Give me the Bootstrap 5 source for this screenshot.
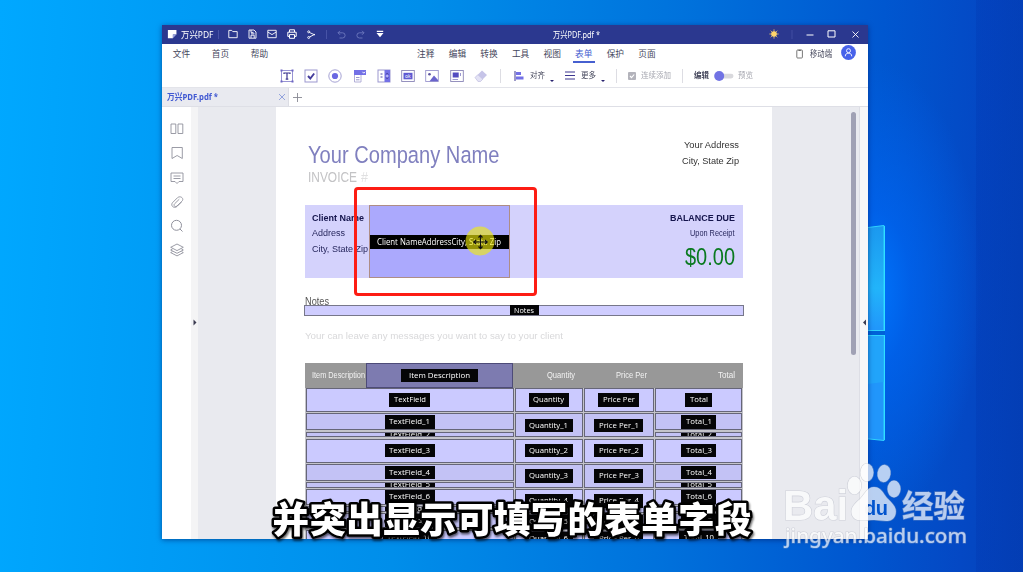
<!DOCTYPE html>
<html lang="zh-CN">
<head>
<meta charset="utf-8">
<title>万兴PDF</title>
<link href="https://cdn.jsdelivr.net/npm/bootstrap@5.3.0/dist/css/bootstrap.min.css" rel="stylesheet">
<style>
body{width:1023px;height:572px;overflow:hidden;position:relative;font-family:"Noto Sans","Noto Sans CJK SC",sans-serif;font-size:9px;line-height:1;color:#45475c;
 background:radial-gradient(ellipse 110px 230px at 872px 290px,#0074fc 0,rgba(0,100,240,.75) 35%,rgba(0,90,220,0) 100%),
 linear-gradient(90deg,transparent 0 976px,rgba(0,40,160,.18) 976px),
 linear-gradient(93deg,#00a8ff 0,#009cf6 17%,#008eea 40%,#0072dc 65%,#0057d0 84%,#0448c4 94%,#0442b8 100%)}
svg{display:block;overflow:visible}
.lit{position:absolute;left:0;top:0}
.app-window{position:absolute;left:162px;top:25px;width:706px;height:514px;background:#fff;box-shadow:0 1px 5px rgba(0,20,90,.55);overflow:hidden}
.fit{white-space:nowrap;flex:none;display:block}
.fit>span{display:inline-block;transform-origin:0 50%}
.titlebar{height:19px;background:#2b388f;color:#fff;display:grid;grid-template-columns:19px 32px 10.5px repeat(5,19.5px) 10.3px repeat(3,19.5px) 163.4px 48px 1fr 24px 34px 24px 24.5px;align-items:center;padding-bottom:1px}
.titlebar svg,.tools svg{margin:auto}
.titlebar .rule{width:1px;height:9px;background:#4753a6;margin:auto}
.menus{height:20px;display:grid;grid-template-columns:repeat(3,39px) 131px repeat(8,31.6px) 1fr 20px 22px 34px;align-items:center;text-align:center;font-size:8.7px;padding-right:2.500px}
.menus .on{color:#4660d0;position:relative;align-self:stretch;line-height:20px}
.menus .on::after{content:"";position:absolute;left:5px;right:5px;bottom:1.500px;height:1.5px;background:#4660d0}
.tools{height:24px;padding-left:112.500px;display:grid;grid-template-columns:repeat(9,24.3px) 13.8px 23.5px 15px 13px 23px 15px 14px 12px 19px 30px 23px 15px 29px 15px;align-items:center;font-size:7.6px;border-bottom:1px solid #e3e4ea}
.tools .rule{width:1px;height:14px;background:#dddde3;margin:auto}
.pale{color:#a6a7b0}
.tabs{height:19px;border-bottom:1px solid #dedfe6}
.tab-one{width:127px;background:#e9eaf0;color:#4159d2;border-right:1px solid #dcdde4;padding:0 3px 1px 5px}
.work{height:432px}
.rail{width:29px;padding-top:15px;flex:none}
.rail svg{height:14px;margin:0 auto 10.3px}
.grip{width:7px;background:#f4f4f5;flex:none;padding-top:212px}
.canvas-area{width:661px;background:#e9eaef;padding-left:78px;flex:none;display:flex}
.sheet{width:496px;height:432px;background:#fff;overflow:hidden;padding:34px 28px 0;font-family:"Liberation Sans",sans-serif;flex:none}
.scroll{width:5px;height:243px;background:#a0a1b4;border-radius:3px;margin:5px 0 0 79px}
.grip-r{width:9px;background:#f7f7f8;border-left:1px solid #dddee5;padding-top:212px;flex:none}
.head-row{height:64px;padding:0 5px 0 4px}
.company{font-size:24.5px;line-height:27px;color:#8080bf}
.inv{font-size:14.5px;line-height:18px;color:#c3c3c5}
.addr{font-size:9.6px;line-height:15.8px;color:#333;margin-top:-4px}
.client{height:73px;width:438px;background:#d4d2fc;color:#28285e;font-size:9.6px;line-height:15.7px;margin-left:.5px}
.client .who{width:64.5px;padding:4.500px 0 0 7px}
.client b{color:#14144c}
.picked{width:141px;height:73px;border:1px solid #ae8d86;background:#aba9fd;padding-top:29px}
.tagline{height:14px;background:#000;color:#fff;font:8.3px/13px "Open Sans",sans-serif;padding-left:7px}
.due{padding:4.500px 7.5px 0 0;width:232px}
.money{font-size:24.5px;line-height:32px;color:#0a7a20}
.notes-label{font-size:10.5px;line-height:12px;color:#555;margin:17px 0 0 1px;height:9.5px}
.notes-field{width:440px;height:11px;background:#cfcdff;border:1px solid #77778a}
.chip{background:#050507;color:#fff;font:8px/12.5px "Open Sans",sans-serif;height:13.5px;padding:0 4.500px;flex:none}
.notes-field .chip{height:10px;line-height:9px}
.hint{font-size:9.5px;line-height:12px;color:#d8d8da;margin:14.500px 0 0 1px;height:33px}
.thead-row{height:25px;width:438px;background:#989898;color:#f2f2f2;font-size:9.3px;line-height:25px;display:grid;grid-template-columns:7px 53px 1.500px 147px 34px 28px 41px 31px 71px 17px;margin-left:.5px}
.described{background:#7d7bb0;border:1px solid #4d4b78}
.grid-body{display:grid;grid-template-columns:208px 68px 70.500px 87px;gap:1px;width:438px;margin-left:.5px;padding-left:1px;background:#c4c4ca}
.stack{display:flex;flex-direction:column;gap:1.3px}
.fld{border:1px solid #666678;background:#cbcaff;display:flex;align-items:center;justify-content:center;overflow:hidden;flex:none}
.row-full{height:24px}
.row-mid{height:17px;background:#c3c2f5}
.row-thin{height:5.7px;background:#c3c2f5}
.row-low{height:15.5px}
.tinted{background:#c3c2f5}
.over{position:absolute}
.redbox{left:354px;top:187px;width:183px;height:109px;border:3px solid #fd1d14;border-radius:4px}
</style>
</head>
<body>
<svg class="lit" width="1023" height="572">
 <defs><linearGradient id="pane" x1="0" y1="0" x2="0" y2="1"><stop offset="0" stop-color="#1b98ef"/><stop offset=".6" stop-color="#22b4fa"/><stop offset="1" stop-color="#2196fb"/></linearGradient></defs>
 <path d="M860 228.500L884 225.500V330.500H860Z" fill="url(#pane)" stroke="#2fd3ff"/>
 <path d="M860 335.500H884V440.500L860 438Z" fill="#2196fb" stroke="#2fd3ff"/>
 <path d="M868 336H884V382L868 384Z" fill="#22a9fa" opacity=".7"/>
 <path d="M884.500 226V440" stroke="#2fe0ff" stroke-width="1"/><path d="M868 333H885" stroke="#0062d8" stroke-width="4"/>
</svg>

<main class="app-window">
 <header class="titlebar">
  <svg width="10" height="10" viewBox="0 0 9 9"><path d="M.8.800H8.500V5H5.300V8.300H.8Z" fill="#fff"/><path d="M5.300 8.300V5H8.500" fill="#98a1dc"/></svg>
  <div class="fit" data-w="32.500"><span>万兴PDF</span></div>
  <i class="rule"></i>
  <svg width="10" height="10" viewBox="0 0 10 10" fill="none" stroke="#fff" stroke-width=".9"><path d="M.8 8.700V1.400H3.700L4.800 2.600H9.200V8.700Z"/></svg>
  <svg width="9" height="10" viewBox="0 0 9 10" fill="none" stroke="#fff" stroke-width=".9"><path d="M1 1H6L8 3V9.200H1ZM3 9V6.200H6.200V9M3 1V3.400H5.500M3 4.800H6.500"/></svg>
  <svg width="10" height="10" viewBox="0 0 10 10" fill="none" stroke="#fff" stroke-width=".9"><path d="M.8 1.300H9.200V8.700H.8ZM.8 3L5 5.600L9.200 3"/></svg>
  <svg width="10" height="10" viewBox="0 0 10 10" fill="none" stroke="#fff" stroke-width="1"><path d="M2.500 3V.8H7.500V3M2.300 7.400H.8V3.200H9.200V7.400H7.700M2.500 5.600H7.500V9.300H2.500Z"/></svg>
  <svg width="9" height="9" viewBox="0 0 9 9" fill="none" stroke="#fff" stroke-width=".9"><path d="M2.500 2.500L8 5M2.500 7L8 4.200"/><circle cx="1.700" cy="1.800" r="1"/><circle cx="1.700" cy="7.500" r="1"/></svg>
  <i class="rule"></i>
  <svg width="9" height="9" viewBox="0 0 9 9" fill="none" stroke="#6d78bd" stroke-width=".9"><path d="M3 .8L1 2.800L3 4.800M1 2.800H5.500A2.600 2.600 0 0 1 5.500 8H2.500"/></svg>
  <svg width="9" height="9" viewBox="0 0 9 9" fill="none" stroke="#6d78bd" stroke-width=".9"><path d="M6 .8L8 2.800L6 4.800M8 2.800H3.500A2.600 2.600 0 0 0 3.500 8H6.500"/></svg>
  <svg width="8" height="8" viewBox="0 0 8 8" fill="#fff"><path d="M.8.800H7.200V2H.8ZM.5 3H7.500L4 7.300Z"/></svg>
  <span></span>
  <div class="fit" data-w="47"><span>万兴PDF.pdf *</span></div>
  <span></span>
  <svg width="10" height="10" viewBox="0 0 10 10"><circle cx="5" cy="5" r="2.800" fill="#ffd66b"/><path d="M5 .3V9.700M.3 5H9.700M1.700 1.700L8.300 8.300M8.300 1.700L1.700 8.300" stroke="#ffd66b" stroke-width=".7"/></svg>
  <svg width="28" height="9" viewBox="0 0 28 9"><path d="M3 0V9" stroke="#4753a6" stroke-width=".8"/><path d="M17.500 5H24.500" stroke="#fff" stroke-width="1"/></svg>
  <svg width="9" height="8" viewBox="0 0 9 8"><path d="M1 .8H8V7H1Z" fill="none" stroke="#fff" stroke-width="1"/></svg>
  <svg width="7" height="7" viewBox="0 0 7 7"><path d="M.5.500L6.500 6.500M6.500.500L.5 6.500" stroke="#fff" stroke-width=".9"/></svg>
 </header>
 <nav class="menus">
  <span>文件</span><span>首页</span><span>帮助</span><span></span>
  <span>注释</span><span>编辑</span><span>转换</span><span>工具</span><span>视图</span><span class="on">表单</span><span>保护</span><span>页面</span>
  <span></span>
  <svg class="ms-1" width="12" height="9" viewBox="0 0 12 9"><rect x="2.800" y="0" width="5.600" height="8" rx=".8" fill="none" stroke="#555" stroke-width=".8"/><path d="M4.500 .3H6.800" stroke="#555"/></svg>
  <div class="fit" data-w="22"><span>移动端</span></div>
  <svg width="15" height="15" viewBox="0 0 15 15" class="mx-auto mb-1"><circle cx="7.500" cy="7.500" r="7.400" fill="#4762ea"/><g fill="none" stroke="#fff" stroke-width=".9"><circle cx="7.500" cy="5.700" r="2"/><path d="M4.300 11.300C4.300 8.900 5.600 8.300 7.500 8.300S10.700 8.900 10.700 11.300"/></g></svg>
 </nav>
 <div class="tools">
  <svg width="14" height="14" viewBox="0 0 14 14"><rect x="1.500" y="1.500" width="11" height="11" fill="#fff" stroke="#8d88cf" stroke-width=".9"/><path d="M4 5V4H10V5M7 4V10M5.700 10.200H8.300" stroke="#3c3690" stroke-width="1.200" fill="none"/><path d="M.5.500h2v2h-2zM11.500.500h2v2h-2zM.5 11.500h2v2h-2zM11.500 11.500h2v2h-2z" fill="#6c65c2"/></svg>
  <svg width="14" height="14" viewBox="0 0 14 14"><rect x="1" y="1" width="12" height="12" fill="#fff" stroke="#9b97cf"/><path d="M4 7L6.300 9.500L10.200 4.500" stroke="#443c9c" stroke-width="1.900" fill="none"/></svg>
  <svg width="14" height="14" viewBox="0 0 14 14"><circle cx="7" cy="7" r="6.200" fill="#fff" stroke="#9b97cf" stroke-width=".9"/><circle cx="7" cy="7" r="3.100" fill="#6a68e2"/></svg>
  <svg width="14" height="14" viewBox="0 0 14 14"><path d="M1.500 6V13H8V6" fill="#fff" stroke="#aaa7d4" stroke-width=".9"/><path d="M1 1H13V6H1Z" fill="#7370e6"/><path d="M9.500 2.800L10.700 4.200L12 2.800" fill="none" stroke="#fff"/><path d="M3 8.500H6.500M3 10.800H6.500" stroke="#9b97cf"/></svg>
  <svg width="14" height="14" viewBox="0 0 14 14"><rect x="1" y="1" width="12" height="12" fill="#fff" stroke="#9b97cf"/><rect x="7.500" y="1" width="5.500" height="12" fill="#7370e6"/><path d="M3.500 5H5.500M3.500 8H5.500M9 5.500L10.200 4L11.500 5.500M9 8.500L10.200 10L11.500 8.500" fill="none" stroke="#4e48a5"/><path d="M9.200 7H11.200" stroke="#fff"/></svg>
  <svg width="14" height="14" viewBox="0 0 14 14"><rect x=".7" y="1.500" width="12.600" height="11" fill="#fff" stroke="#8a86b8" stroke-width=".9"/><rect x="2.500" y="3.800" width="9" height="6.500" fill="#5f5ad2"/><text x="4" y="8.900" font-size="5" fill="#fff">ok</text></svg>
  <svg width="14" height="14" viewBox="0 0 14 14"><rect x=".7" y="1.500" width="12.600" height="11" fill="#fff" stroke="#9b97cf" stroke-width=".9"/><path d="M4.500 12.300L9 6.500L13 11V12.300Z" fill="#6a64cc"/><circle cx="4.500" cy="5.300" r="1.300" fill="#5a539e"/></svg>
  <svg width="14" height="14" viewBox="0 0 14 14"><rect x=".7" y="1.500" width="12.600" height="11" fill="#fff" stroke="#8a86b8" stroke-width=".9"/><rect x="2.700" y="3.500" width="6" height="5" fill="#534cc0"/><path d="M2.500 10.500H8M10.500 4V7" stroke="#9b97cf"/></svg>
  <svg width="14" height="14" viewBox="0 0 14 14"><path d="M1 8.500L8 1.500L13 6L6.500 12.500H4Z" fill="#c6c4e8"/><path d="M1 8.500L3.800 5.700L8.800 10.200L6.500 12.500H4Z" fill="#e3e2f5" stroke="#c3c1df" stroke-width=".6"/></svg>
  <i class="rule"></i>
  <svg width="10" height="10" viewBox="0 0 10 10"><path d="M1 0V10" stroke="#3c3690"/><path d="M2 1H7V4H2ZM2 5.500H9.500V8.500H2Z" fill="#7370e6"/></svg>
  <div class="fit" data-w="15"><span>对齐</span></div>
  <svg width="4" height="3" viewBox="0 0 4 3" class="mt-3"><path d="M0 0H4L2 2Z" fill="#29236f"/></svg>
  <svg width="10" height="9" viewBox="0 0 10 9"><path d="M0 1H10M0 4.500H10M0 8H10" stroke="#3c3690" stroke-width="1"/></svg>
  <div class="fit" data-w="15"><span>更多</span></div>
  <svg width="4" height="3" viewBox="0 0 4 3" class="mt-3"><path d="M0 0H4L2 2Z" fill="#29236f"/></svg>
  <i class="rule"></i>
  <svg width="8" height="8" viewBox="0 0 8 8"><rect width="8" height="8" rx="1" fill="#b3b3bb"/><path d="M2 4L3.500 5.600L6.200 2.500" fill="none" stroke="#fff" stroke-width="1.100"/></svg>
  <div class="fit pale" data-w="30"><span>连续添加</span></div>
  <i class="rule"></i>
  <div class="fit fw-bold" data-w="15"><span>编辑</span></div>
  <svg width="20" height="10" viewBox="0 0 20 10"><rect x="5" y="2.700" width="14.500" height="4.800" rx="2.400" fill="#d9d9dd"/><circle cx="5.200" cy="5" r="5" fill="#7173e4"/></svg>
  <div class="fit pale" data-w="15"><span>预览</span></div>
 </div>
 <div class="tabs d-flex">
  <div class="tab-one d-flex align-items-center justify-content-between"><div class="fit fw-bold" data-w="51"><span>万兴PDF.pdf *</span></div>
   <svg width="6" height="6" viewBox="0 0 6 6"><path d="M0 0L6 6M6 0L0 6" stroke="#7c91d8" stroke-width=".8"/></svg></div>
  <svg class="ms-1 mt-auto mb-auto" width="9" height="9" viewBox="0 0 9 9"><path d="M4.500 0V9M0 4.500H9" stroke="#888993" stroke-width=".9"/></svg>
 </div>
 <div class="work d-flex">
  <aside class="rail">
   <svg width="14" viewBox="0 0 14 14" fill="none" stroke="#90919c" stroke-width=".9"><path d="M1 2H5.800V11.500H1ZM8 2H12.800V11.500H8Z"/></svg>
   <svg width="14" viewBox="0 0 14 14" fill="none" stroke="#90919c" stroke-width=".9"><path d="M2 1.500H12.300V12.500L7.100 9.500L2 12.500Z"/></svg>
   <svg width="14" viewBox="0 0 14 14" fill="none" stroke="#90919c" stroke-width=".9"><path d="M1 2H13V10.500H9L7 12.500L5 10.500H1ZM3.500 5H10.500M3.500 7.500H10.500"/></svg>
   <svg width="14" viewBox="0 0 14 14" fill="none" stroke="#90919c" stroke-width=".9"><path d="M11.300 7.200L7 11.500C3.800 14 .3 10.500 2.400 7.800L7.500 2.700C10.500.200 14.500 3.500 12 6.200L7 11C5 12.500 3 10.500 4.600 8.800L9.300 4.200"/></svg>
   <svg width="14" viewBox="0 0 14 14" fill="none" stroke="#90919c" stroke-width="1"><circle cx="6.500" cy="6.300" r="5"/><path d="M10 10L12.500 12.500"/></svg>
   <svg width="14" viewBox="0 0 14 14" fill="none" stroke="#90919c" stroke-width=".9"><path d="M7 1L13.300 4.300L7 7.600L.7 4.300ZM2.500 6L.7 7L7 10.300L13.300 7L11.500 6M2.500 8.600L.7 9.600L7 12.900L13.300 9.600L11.500 8.600"/></svg>
  </aside>
  <div class="grip"><svg width="5" height="7" viewBox="0 0 5 7" class="ms-auto me-auto"><path d="M1.500 .5L4.500 3.500L1.500 6.500Z" fill="#3b3b50"/></svg></div>
  <div class="canvas-area">
   <article class="sheet">
    <div class="head-row d-flex justify-content-between">
     <div>
      <div class="fit company" data-w="191.500"><span>Your Company Name</span></div>
      <div class="d-flex inv"><div class="fit" data-w="49"><span>INVOICE</span></div><div class="fit ms-1" data-w="7" ><span class="opacity-50">#</span></div></div>
     </div>
     <div class="addr d-flex flex-column align-items-end" >
      <div class="fit" data-w="55"><span>Your Address</span></div><div class="fit" data-w="57"><span>City, State Zip</span></div>
     </div>
    </div>
    <section class="client d-flex">
     <div class="who"><div class="fit" data-w="52"><span><b>Client Name</b></span></div><div class="fit" data-w="33"><span>Address</span></div><div class="fit" data-w="56"><span>City, State Zip</span></div></div>
     <div class="picked"><div class="tagline"><div class="fit" data-w="124"><span>Client NameAddressCity, State Zip</span></div></div></div>
     <div class="due d-flex flex-column align-items-end"><div class="fit" data-w="65"><span><b>BALANCE DUE</b></span></div><div class="fit" data-w="44.500"><span>Upon Receipt</span></div><div class="fit money" data-w="50"><span>$0.00</span></div></div>
    </section>
    <div class="notes-label"><div class="fit" data-w="24"><span>Notes</span></div></div>
    <div class="notes-field d-flex justify-content-center align-items-center"><div class="chip"><div class="fit" data-w="20"><span>Notes</span></div></div></div>
    <div class="hint"><div class="fit" data-w="258"><span>Your can leave any messages you want to say to your client</span></div></div>
    <div class="thead-row">
     <span></span><div class="fit" data-w="53"><span>Item Description</span></div><span></span>
     <div class="described d-flex align-items-center justify-content-center"><div class="chip px-2"><div class="fit" data-w="61"><span>Item Description</span></div></div></div>
     <span></span><div class="fit" data-w="28"><span>Quantity</span></div><span></span><div class="fit" data-w="31"><span>Price Per</span></div><span></span><div class="fit" data-w="17"><span>Total</span></div>
    </div>
    <div class="grid-body" id="gridBody"></div>
   </article>
   <div class="scroll"></div>
  </div>
  <div class="grip-r"><svg width="5" height="7" viewBox="0 0 5 7" class="ms-auto me-auto"><path d="M4 .5L1 3.500L4 6.500Z" fill="#3b3b50"/></svg></div>
 </div>
</main>

<div class="over redbox"></div>
<svg class="lit" width="1023" height="572">
 <circle cx="480" cy="241" r="14.500" fill="#f2ee0c" fill-opacity=".62"/>
 <path d="M480.500 235.500V248.500M474 242H487M478.500 237.500L480.500 235.300L482.500 237.500M478.500 246.500L480.500 248.700L482.500 246.500M476 240L473.800 242L476 244M485 240L487.200 242L485 244" fill="none" stroke="#111" stroke-width="1.200"/>
 <g opacity=".72" fill="#fff">
  <g stroke="#a9adba" stroke-opacity=".6" stroke-width="1.200" paint-order="stroke">
   <text x="783" y="519.500" font-family="Liberation Sans" font-weight="700" font-size="42" textLength="65" lengthAdjust="spacingAndGlyphs">Bai</text>
   <ellipse cx="854.500" cy="485.500" rx="6.800" ry="9"/><ellipse cx="867" cy="472.500" rx="6.500" ry="9"/><ellipse cx="884" cy="473.500" rx="6.500" ry="8.700" transform="rotate(8 884 473.500)"/><ellipse cx="894" cy="489" rx="6.500" ry="8.500"/>
   <path mask="url(#cut)" d="M874 487C867 487 865 494 860 499C853 505 850 509 852 515C855 523 865 520 874 520S891 524 895 516C898 508 893 504 887 498C883 493 881 487 874 487Z"/>
   <text x="902" y="516.500" font-family="Noto Sans CJK SC" font-weight="700" font-size="31" textLength="63" lengthAdjust="spacingAndGlyphs">经验</text>
   <text x="785" y="543" font-family="Noto Sans" font-weight="500" font-size="20" textLength="182" lengthAdjust="spacingAndGlyphs">jingyan.baidu.com</text>
  </g>
 </g>
 <mask id="cut" maskUnits="userSpaceOnUse" x="840" y="460" width="70" height="70"><rect x="840" y="460" width="70" height="70" fill="#fff"/><text x="864" y="515" fill="#000" font-family="Liberation Sans" font-weight="700" font-size="20" textLength="24">du</text></mask>
 <g font-family="Noto Sans CJK SC" font-weight="900" font-size="36.500" stroke-linejoin="round">
  <text x="272.500" y="533" textLength="479" fill="#fff" stroke="#000" stroke-width="5" paint-order="stroke" style="filter:drop-shadow(1px 2px 1px rgba(0,0,0,.6))">并突出显示可填写的表单字段</text>
 </g>
</svg>

<script src="https://cdn.jsdelivr.net/npm/bootstrap@5.3.0/dist/js/bootstrap.bundle.min.js"></script>
<script>
// Form-field columns: [row class, label, label text width]
const split = (p, w) => [['row-full', p, w[0]], ['row-mid', p + '_1', w[1]], ['row-thin', p + '_2', w[1]], ['row-full', p + '_3', w[1]],
  ['row-mid', p + '_4', w[1]], ['row-thin', p + '_5', w[1]], ['row-low', p + '_6', w[1]], ['row-thin', p + '_7', w[1]], ['row-low tinted', p + '_8', w[1]], ['row-low', p + '_10', w[1] + 4]];
const plain = (p, w) => [['row-full', p, w[0]], ['row-full tinted', p + '_1', w[1]], ['row-full', p + '_2', w[1]], ['row-full tinted', p + '_3', w[1]],
  ['row-full', p + '_4', w[1]], ['row-low tinted', p + '_5', w[1]], ['row-low', p + '_6', w[1]]];
const columns = [split('TextField', [32, 41]), plain('Quantity', [31, 39]), plain('Price Per', [32, 40]), split('Total', [18, 26])];
document.getElementById('gridBody').innerHTML = columns.map(col => '<div class="stack">' + col.map(([h, t, w]) =>
  `<div class="fld ${h}"><div class="chip"><div class="fit" data-w="${w}"><span>${t}</span></div></div></div>`).join('') + '</div>').join('');
// Condense or widen each label to its set measure
document.querySelectorAll('.fit').forEach(el => {
  const s = el.firstElementChild, w = +el.dataset.w, n = s.getBoundingClientRect().width;
  s.style.transform = `scaleX(${w / n})`;
  s.style.marginRight = (w - n) + 'px';
  el.style.width = w + 'px';
});
</script>
</body>
</html>
